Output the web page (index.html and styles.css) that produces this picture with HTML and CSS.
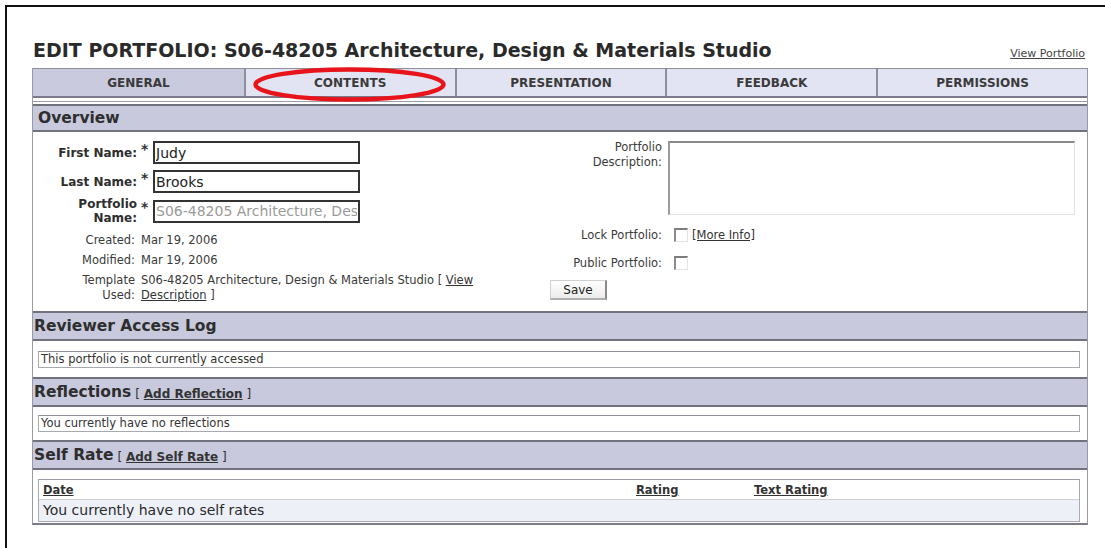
FILE: index.html
```html
<!DOCTYPE html>
<html lang="en">
<head>
<meta charset="utf-8">
<title>Edit Portfolio</title>
<link rel="stylesheet" href="styles.css">
</head>
<body>
<div class="frame">
  <div class="titlebar">
    <h1 class="page-title">EDIT PORTFOLIO: S06-48205 Architecture, Design &amp; Materials Studio</h1>
    <a class="view-link" href="#">View Portfolio</a>
  </div>

  <div class="panel">
    <nav class="tabs">
      <a class="tab tab-active" href="#">GENERAL</a>
      <a class="tab" href="#">CONTENTS</a>
      <a class="tab" href="#">PRESENTATION</a>
      <a class="tab" href="#">FEEDBACK</a>
      <a class="tab" href="#">PERMISSIONS</a>
      <svg class="tab-mark" width="193" height="35" viewBox="0 0 193 35">
        <ellipse cx="96.5" cy="17.5" rx="94" ry="15" fill="none" stroke="#e8141b" stroke-width="4.5"/>
      </svg>
    </nav>
    <div class="tab-rule"></div>

    <section class="sec">
      <div class="sec-head sec-head-first">Overview</div>
      <div class="overview">
        <div class="form-left">
          <div class="frow">
            <span class="flabel">First Name:</span>
            <span class="req">*</span>
            <input class="text" type="text" value="Judy">
          </div>
          <div class="frow frow-2">
            <span class="flabel">Last Name:</span>
            <span class="req">*</span>
            <input class="text" type="text" value="Brooks">
          </div>
          <div class="frow frow-3">
            <span class="flabel">Portfolio<br>Name:</span>
            <span class="req">*</span>
            <input class="text text-dim" type="text" value="S06-48205 Architecture, Design &amp; Materials Studio" readonly>
          </div>
          <div class="frow frow-info frow-created">
            <span class="ilabel">Created:</span>
            <span class="ivalue">Mar 19, 2006</span>
          </div>
          <div class="frow frow-info frow-modified">
            <span class="ilabel">Modified:</span>
            <span class="ivalue">Mar 19, 2006</span>
          </div>
          <div class="frow frow-info frow-template">
            <span class="ilabel">Template<br>Used:</span>
            <span class="ivalue">S06-48205 Architecture, Design &amp; Materials Studio [ <a href="#">View</a><br><a href="#">Description</a> ]</span>
          </div>
        </div>

        <div class="form-right">
          <div class="rrow rrow-desc">
            <span class="rlabel">Portfolio<br>Description:</span>
            <textarea class="desc"></textarea>
          </div>
          <div class="rrow rrow-lock">
            <span class="rlabel">Lock Portfolio:</span>
            <input class="check" type="checkbox">
            <a class="more" href="#">[More Info]</a>
          </div>
          <div class="rrow rrow-public">
            <span class="rlabel">Public Portfolio:</span>
            <input class="check" type="checkbox">
          </div>
          <button class="save" type="button">Save</button>
        </div>
      </div>
    </section>

    <section class="sec">
      <div class="sec-head">Reviewer Access Log</div>
      <div class="sec-body sec-body-log">
        <div class="note">This portfolio is not currently accessed</div>
      </div>
    </section>

    <section class="sec">
      <div class="sec-head">Reflections <span class="head-extra">[ <a href="#">Add Reflection</a> ]</span></div>
      <div class="sec-body sec-body-refl">
        <div class="note">You currently have no reflections</div>
      </div>
    </section>

    <section class="sec">
      <div class="sec-head">Self Rate <span class="head-extra">[ <a href="#">Add Self Rate</a> ]</span></div>
      <div class="sec-body sec-body-rate">
        <div class="rate-table">
          <div class="rate-head">
            <a href="#">Date</a>
            <a href="#">Rating</a>
            <a href="#">Text Rating</a>
          </div>
          <div class="rate-row">You currently have no self rates</div>
        </div>
      </div>
    </section>
  </div>
</div>
</body>
</html>
```

FILE: styles.css
```css
html, body {
  margin: 0;
  padding: 0;
  background: #fff;
  overflow: hidden;
}

body {
  font-family: "DejaVu Sans", "Noto Sans", sans-serif;
  color: #333;
}

a {
  color: #333;
}

/* outer window frame */
.frame {
  margin: 5px 0 0 5px;
  border-top: 2px solid #111;
  border-left: 2px solid #111;
  height: 543px;
  padding: 31px 0 0 25px;
  box-sizing: border-box;
  overflow: hidden;
}

/* page title */
.titlebar {
  width: 1056px;
  height: 24px;
  display: flex;
  justify-content: space-between;
  align-items: baseline;
  margin-bottom: 6px;
}

.page-title {
  margin: 0;
  padding-left: 1px;
  font: bold 19px/24px "DejaVu Sans", sans-serif;
  color: #2a2a2a;
}

.view-link {
  font-size: 11px;
  color: #444;
  margin-right: 3px;
}

/* main panel */
.panel {
  width: 1056px;
  box-sizing: border-box;
  border-left: 1px solid #9a9aa6;
  border-right: 1px solid #9a9aa6;
  border-bottom: 2px solid #7c7c88;
}

/* tab strip */
.tabs {
  position: relative;
  display: grid;
  grid-template-columns: repeat(5, 1fr);
  height: 30px;
  box-sizing: border-box;
  border-top: 1px solid #8e8e9c;
  border-bottom: 2px solid #7a7a88;
}

.tab {
  display: flex;
  align-items: center;
  justify-content: center;
  background: #e2e4f3;
  border-left: 2px solid #8e8e9c;
  font-size: 12px;
  font-weight: bold;
  color: #3a3a3a;
  text-decoration: none;
}

.tab-active {
  border-left: 0;
  background: #c9cadd;
}

.tab-mark {
  position: absolute;
  left: 220px;
  top: -2px;
}

.tab-rule {
  height: 1px;
  background: #9c9caa;
  margin: 3px 0 2px;
}

/* section headers */
.sec-head {
  height: 26px;
  display: flex;
  align-items: center;
  padding-left: 1px;
  background: #c8c9dc;
  border-top: 2px solid #72727f;
  border-bottom: 2px solid #72727f;
  font-size: 15.5px;
  font-weight: bold;
  color: #2e2e2e;
}

.sec-head-first {
  height: 24px;
  padding-left: 5px;
}

.head-extra {
  font-size: 12px;
  font-weight: normal;
  margin-left: 4px;
  padding-top: 3px;
}

.head-extra a {
  font-weight: bold;
}

/* overview form */
.overview {
  display: flex;
  height: 179px;
  box-sizing: border-box;
  padding-top: 9px;
}

.form-left {
  width: 512px;
}

.frow {
  display: flex;
  align-items: center;
  height: 23px;
}

.frow-2 {
  margin-top: 6px;
}

.frow-3 {
  height: 30px;
  margin-top: 3px;
}

.flabel {
  width: 104px;
  text-align: right;
  font-size: 12px;
  font-weight: bold;
  line-height: 14px;
  color: #2e2e2e;
}

.req {
  width: 12px;
  margin-left: 4px;
  font-size: 14px;
  font-weight: bold;
  align-self: flex-start;
  margin-top: 0;
}

.frow-3 .req {
  margin-top: 3px;
}

.text {
  width: 207px;
  height: 23px;
  box-sizing: border-box;
  border: 2px solid #333;
  padding: 0 1px;
  font: 14px "DejaVu Sans", sans-serif;
  color: #222;
  background: #fff;
}

.text-dim {
  color: #9a9a9a;
}

.frow-info {
  height: 16px;
  font-size: 11.5px;
  line-height: 16px;
  color: #3a3a3a;
}

.frow-created {
  margin-top: 6px;
}

.frow-modified {
  margin-top: 4px;
}

.frow-template {
  margin-top: 5px;
  height: auto;
  align-items: flex-start;
  line-height: 15px;
}

.ilabel {
  width: 102px;
  text-align: right;
  margin-right: 6px;
}

.ivalue {
  width: 356px;
}

/* right side of overview */
.form-right {
  flex: 1;
}

.rrow {
  display: flex;
  align-items: center;
  font-size: 11.5px;
  color: #3a3a3a;
}

.rlabel {
  width: 117px;
  text-align: right;
  margin-right: 6px;
  line-height: 15px;
}

.rrow-desc {
  align-items: flex-start;
}

.rrow-desc .rlabel {
  margin-top: -1px;
}

.desc {
  width: 407px;
  height: 74px;
  box-sizing: border-box;
  margin: 0;
  resize: none;
  border-top: 2px solid #8a8a8a;
  border-left: 2px solid #9a9a9a;
  border-right: 1px solid #e2e2e2;
  border-bottom: 1px solid #e2e2e2;
  background: #fff;
}

.rrow-lock {
  margin-top: 12px;
  height: 16px;
}

.rrow-public {
  margin-top: 12px;
  height: 16px;
}

.check {
  appearance: none;
  -webkit-appearance: none;
  width: 14px;
  height: 14px;
  margin: 0 0 0 6px;
  box-sizing: border-box;
  border-top: 2px solid #7d7d7d;
  border-left: 2px solid #8a8a8a;
  border-right: 1px solid #e4e4e4;
  border-bottom: 1px solid #e4e4e4;
  background: #fff;
}

.more {
  margin-left: 4px;
  font-size: 11.5px;
}

.save {
  margin: 9px 0 0 5px;
  width: 57px;
  height: 20px;
  padding: 0;
  font: 12px "DejaVu Sans", sans-serif;
  color: #222;
  background: linear-gradient(#ffffff, #ececec);
  border: 1px solid #d0d0d0;
  border-right: 2px solid #8a8a8a;
  border-bottom: 2px solid #b0b0b0;
}

/* simple section bodies */
.sec-body {
  padding: 0 7px 0 5px;
}

.sec-body-log {
  padding-top: 10px;
  padding-bottom: 9px;
}

.sec-body-refl {
  padding-top: 8px;
  padding-bottom: 8px;
}

.sec-body-rate {
  padding-top: 9px;
  padding-bottom: 1px;
}

.note {
  height: 17px;
  box-sizing: border-box;
  border: 1px solid #a8a8b0;
  border-top-color: #8e8e98;
  padding-left: 2px;
  font-size: 11.5px;
  line-height: 15px;
  color: #333;
}

/* self rate table */
.rate-table {
  border: 1px solid #a8a8b8;
  border-top-color: #9a9aac;
}

.rate-head {
  display: grid;
  grid-template-columns: 593px 118px 1fr;
  height: 19px;
  align-items: center;
  padding-left: 4px;
  border-bottom: 1px solid #cfcfd8;
  font-size: 11.5px;
  font-weight: bold;
}

.rate-head a {
  justify-self: start;
}

.rate-row {
  height: 21px;
  line-height: 21px;
  padding-left: 4px;
  background: #eef0f8;
  font-size: 14px;
  color: #2a2a2a;
}
```
